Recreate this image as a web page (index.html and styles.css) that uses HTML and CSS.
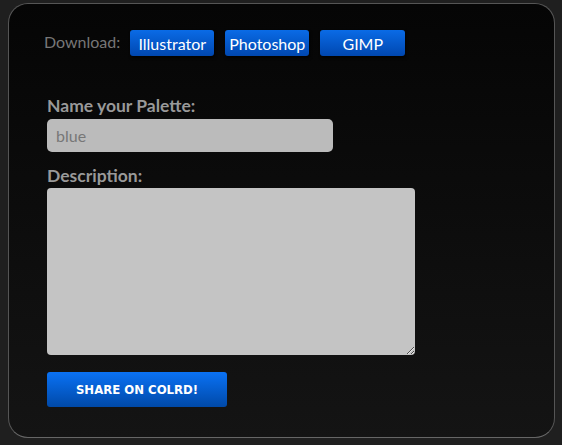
FILE: index.html
```html
<!DOCTYPE html>
<html>
<head>
<meta charset="utf-8">
<link rel="stylesheet" href="styles.css">
</head>
<body>
<div class="panel">
  <div class="downloads">
    <span class="dl-label">Download:</span>
    <a class="dl-btn">Illustrator</a>
    <a class="dl-btn">Photoshop</a>
    <a class="dl-btn">GIMP</a>
  </div>
  <form class="form">
    <label class="label">Name your Palette:</label>
    <input class="name" type="text" value="blue">
    <label class="label desc-label">Description:</label>
    <textarea class="desc"></textarea>
    <button type="button" class="share">SHARE ON COLRD!</button>
  </form>
</div>
</body>
</html>
```
FILE: styles.css
```css
html, body {
  margin: 0;
  padding: 0;
  background: #1f1f1f;
  height: 100%;
}
body {
  padding: 3px 6px 0 8px;
  box-sizing: border-box;
  font-family: Lato, "Open Sans", sans-serif;
}
.panel {
  width: 547px;
  height: 435px;
  box-sizing: border-box;
  border: 1px solid #555;
  border-bottom-color: #666;
  border-radius: 20px;
  background: linear-gradient(#050505, #141414);
  padding: 26px 0 0 35px;
}
.downloads {
  display: flex;
  align-items: center;
  gap: 11px;
  height: 26px;
}
.dl-label {
  color: #777;
  font-size: 16px;
  margin-top: -3px;
  margin-right: -1px;
}
.dl-btn {
  width: 84px;
  height: 26px;
  box-sizing: border-box;
  display: flex;
  align-items: center;
  justify-content: center;
  color: #fff;
  font-size: 16px;
  border-radius: 3px;
  background: linear-gradient(#0a6be6, #0047b0);
  box-shadow: 1px 2px 3px rgba(0,0,0,0.8);
}
.dl-btn:last-child { width: 85px; }
.form {
  display: flex;
  flex-direction: column;
  align-items: flex-start;
  margin: 40px 0 0 3px;
}
.label {
  color: #999;
  font-weight: bold;
  font-size: 17.5px;
  line-height: 20px;
  height: 20px;
}
.name {
  margin-top: 3px;
  width: 286px;
  height: 33px;
  box-sizing: border-box;
  border: none;
  border-radius: 5px;
  background: #bbbbbb;
  color: #777;
  font-family: Lato, sans-serif;
  font-size: 16px;
  padding: 0 9px;
  outline: none;
}
.desc-label { margin-top: 14px; }
.desc {
  margin-top: 2px;
  width: 368px;
  height: 167px;
  box-sizing: border-box;
  border: none;
  border-radius: 4px;
  background: #c4c4c4;
  outline: none;
  font-family: Lato, sans-serif;
}
.share {
  margin-top: 17px;
  width: 180px;
  height: 35px;
  border: none;
  border-radius: 3px;
  background: linear-gradient(#0a72f5, #0049a8);
  color: #fff;
  font-family: "DejaVu Sans Condensed", "DejaVu Sans", sans-serif;
  font-weight: bold;
  font-size: 13px;
  padding: 0;
}
```
